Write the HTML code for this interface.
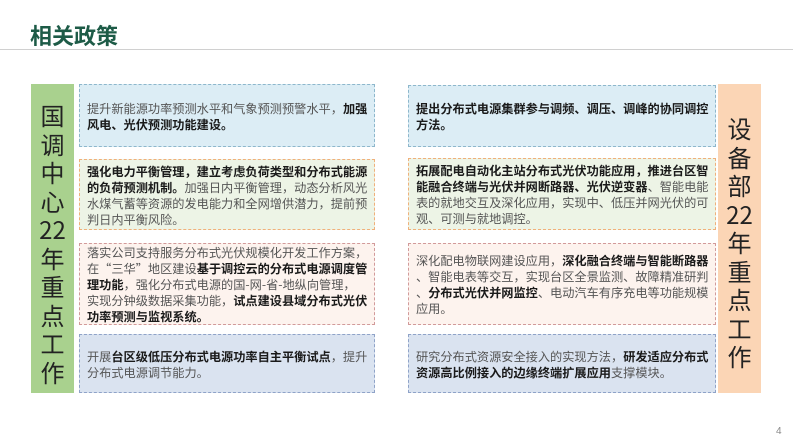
<!DOCTYPE html>
<html><head><meta charset="utf-8"><style>
*{margin:0;padding:0;box-sizing:border-box}
body{width:793px;height:446px;background:#fff;position:relative;overflow:hidden;font-family:"Liberation Sans","Noto Sans CJK SC",sans-serif}
.title{position:absolute;left:30px;top:19px;font-size:22px;font-weight:bold;color:#1d5b47}
.line{position:absolute;left:0;top:49px;width:793px;height:1px;background:#d0d0d0}
.bar{position:absolute;top:84px;height:309px;width:43px;text-align:center;font-size:24px;line-height:28.5px;color:#222;font-family:"Noto Sans CJK SC",sans-serif}
.box{position:absolute;font-size:12.2px;line-height:16px;color:#555;padding:0 5px 0 7px;display:flex;align-items:center;font-family:"Noto Sans CJK SC",sans-serif;white-space:nowrap;overflow:hidden}
.box b{color:#1a1a1a}
.b1{background:#dcedf5;border:1px dashed #8db7cc}
.b2{background:#edf4e6;border:1px dashed #f0b07a}
.b3{background:#fdf3ee;border:1px dashed #d29a9a}
.b4{background:#dae3f0;border:1px dashed #8fa3c8}
.pn{position:absolute;left:776px;top:426px;font-size:10px;color:#888}
</style></head><body>
<div class="title">相关政策</div>
<div class="line"></div>
<div class="bar" style="left:31px;background:#a9d18e;padding-top:17px">国<br>调<br>中<br>心<br>22<br>年<br>重<br>点<br>工<br>作</div>
<div class="bar" style="left:718px;background:#fbd5b5;padding-top:30px">设<br>备<br>部<br>22<br>年<br>重<br>点<br>工<br>作</div>

<div class="box b1" style="left:79px;top:84px;width:296px;height:63px"><div>提升新能源功率预测水平和气象预测预警水平，<b>加强</b><br><b>风电、光伏预测功能建设。</b></div></div>
<div class="box b2" style="left:79px;top:159px;width:296px;height:71px"><div><b>强化电力平衡管理，建立考虑负荷类型和分布式能源</b><br><b>的负荷预测机制。</b>加强日内平衡管理，动态分析风光<br>水煤气蓄等资源的发电能力和全网增供潜力，提前预<br>判日内平衡风险。</div></div>
<div class="box b3" style="left:79px;top:243px;width:296px;height:82px"><div>落实公司支持服务分布式光伏规模化开发工作方案，<br>在“三华”地区建设<b>基于调控云的分布式电源调度管</b><br><b>理功能</b>，强化分布式电源的国-网-省-地纵向管理，<br>实现分钟级数据采集功能，<b>试点建设县域分布式光伏</b><br><b>功率预测与监视系统。</b></div></div>
<div class="box b4" style="left:79px;top:334px;width:296px;height:59px"><div>开展<b>台区级低压分布式电源功率自主平衡试点</b>，提升<br>分布式电源调节能力。</div></div>

<div class="box b1" style="left:408px;top:85px;width:308px;height:62px"><div><b>提出分布式电源集群参与调频、调压、调峰的协同调控</b><br><b>方法。</b></div></div>
<div class="box b2" style="left:408px;top:158px;width:308px;height:72px"><div><b>拓展配电自动化主站分布式光伏功能应用，推进台区智</b><br><b>能融合终端与光伏并网断路器、光伏逆变器</b>、智能电能<br>表的就地交互及深化应用，实现中、低压并网光伏的可<br>观、可测与就地调控。</div></div>
<div class="box b3" style="left:408px;top:243px;width:308px;height:82px"><div>深化配电物联网建设应用，<b>深化融合终端与智能断路器</b><br>、智能电表等交互，实现台区全景监测、故障精准研判<br>、<b>分布式光伏并网监控</b>、电动汽车有序充电等功能规模<br>应用。</div></div>
<div class="box b4" style="left:408px;top:334px;width:308px;height:59px"><div>研究分布式资源安全接入的实现方法，<b>研发适应分布式</b><br><b>资源高比例接入的边缘终端扩展应用</b>支撑模块。</div></div>
<div class="pn">4</div>
</body></html>
